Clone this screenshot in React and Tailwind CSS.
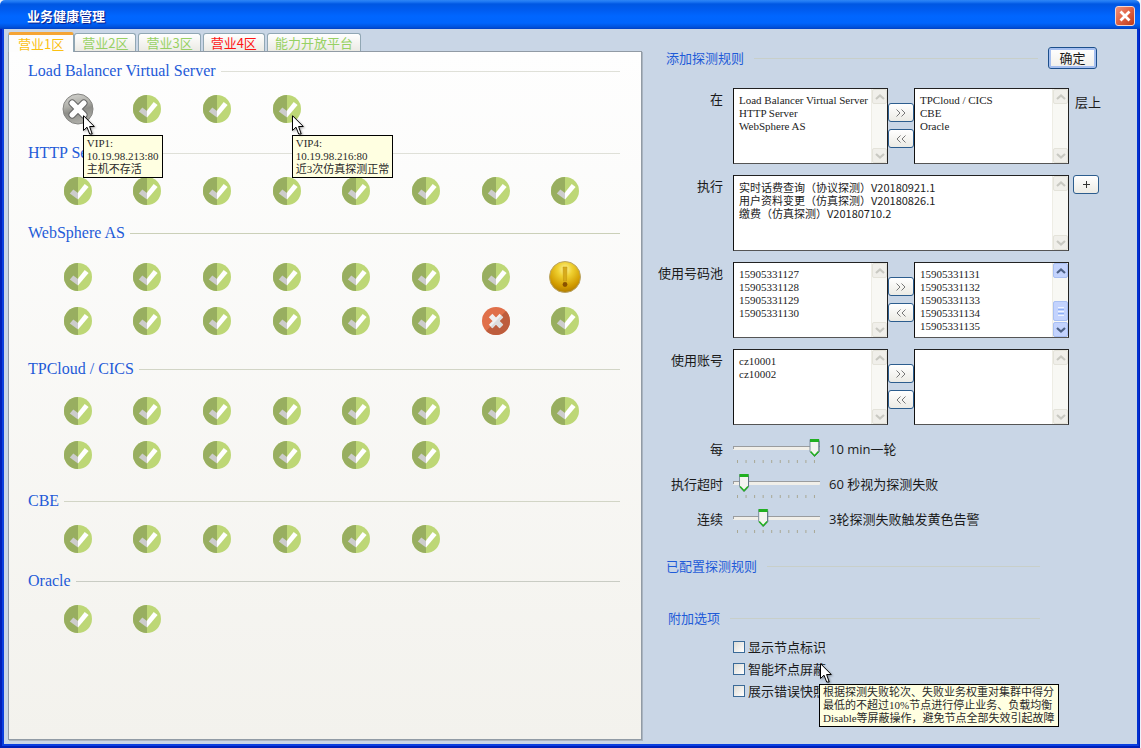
import { useId, useState } from "react";

const tabs = [
  { label: "营业1区", tone: "text-[#fbc012]", active: true },
  { label: "营业2区", tone: "text-[#97d163]" },
  { label: "营业3区", tone: "text-[#97d163]" },
  { label: "营业4区", tone: "text-[#ff1414]" },
  { label: "能力开放平台", tone: "text-[#97d163]" },
];

const ok = (n) => Array.from({ length: n }, () => ({ state: "ok" }));

const groups = [
  {
    name: "Load Balancer Virtual Server",
    spacing: "gap-[6px]",
    rule: "bg-[#dfe0d8]",
    nodes: [
      { state: "down", tip: ["VIP1:", "10.19.98.213:80", "主机不存活"] },
      { state: "ok" },
      { state: "ok" },
      { state: "ok", tip: ["VIP4:", "10.19.98.216:80", "近3次仿真探测正常"] },
    ],
  },
  { name: "HTTP Server", spacing: "mt-[12px] gap-[6px]", rule: "bg-[#dfe0d8]", nodes: ok(8) },
  {
    name: "WebSphere AS",
    spacing: "mt-[10px] gap-[12px]",
    rule: "bg-[#cbd0b8]",
    nodes: [...ok(7), { state: "warn" }, ...ok(6), { state: "error" }, { state: "ok" }],
  },
  { name: "TPCloud / CICS", spacing: "mt-[16px] gap-[10px]", rule: "bg-[#d2d5c6]", nodes: ok(14) },
  { name: "CBE", spacing: "mt-[14px] gap-[6px]", rule: "bg-[#d2d5c6]", nodes: ok(6) },
  { name: "Oracle", spacing: "mt-[10px] gap-[6px]", rule: "bg-[#c9ccc4]", nodes: ok(2) },
];

const sans = "font-['Open_Sans','Noto_Sans_CJK_SC',sans-serif]";
const cjk = "font-['Noto_Sans_CJK_SC',sans-serif]";
const serif = "font-['Liberation_Serif','Noto_Sans_CJK_SC',serif]";

function OkIcon() {
  return (
    <svg viewBox="-14 -14 28 28" className="size-7" aria-hidden="true">
      <circle r="14" fill="#bdd776" />
      <path d="M0-14A14 14 0 0 0 0 14Z" fill="#98ae60" />
      <path d="M-8.200 2.400-4.700-1.600 0 2V8.500Z" fill="#cdcdcd" />
      <path d="M0 1.600 6.700-7 10.600-4 0 8.500Z" fill="#fff" />
    </svg>
  );
}

function ErrorIcon() {
  return (
    <svg viewBox="-14 -14 28 28" className="size-7" aria-hidden="true">
      <circle r="14" fill="#e0704a" />
      <path d="M9.9-9.9A14 14 0 0 1-9.9 9.9Z" fill="#bd5d3d" />
      <path d="M-5.400-5.400 5.400 5.400M5.400-5.400-5.400 5.400" stroke="#f0f0f0" strokeWidth="5" />
      <path d="M3.600 0 7.200 3.600 3.600 7.200 0 3.600-3.600 7.200-5.400 5.400 5.400-5.400 7.200-3.600Z" fill="#dcdcdc" />
    </svg>
  );
}

function DownIcon() {
  return (
    <svg viewBox="-16 -16 32 32" className="size-8" aria-hidden="true">
      <defs>
        <linearGradient id="down-face" x1=".35" y1="0" x2=".6" y2="1">
          <stop offset="0" stopColor="#d0d0cc" />
          <stop offset=".35" stopColor="#b0b0aa" />
          <stop offset=".55" stopColor="#8e8e89" />
          <stop offset="1" stopColor="#b2b2ac" />
        </linearGradient>
      </defs>
      <circle r="15" fill="url(#down-face)" stroke="#858582" strokeWidth="1" />
      <path d="M-5.800-5.800 5.800 5.800M5.800-5.800-5.800 5.800" stroke="#666" strokeWidth="7.400" strokeLinecap="round" />
      <path d="M-5.800-5.800 5.800 5.800M5.800-5.800-5.800 5.800" stroke="#fff" strokeWidth="5.400" strokeLinecap="round" />
    </svg>
  );
}

function WarnIcon() {
  return (
    <svg viewBox="-16 -16 32 32" className="size-8" aria-hidden="true">
      <defs>
        <radialGradient id="warn-face" cx=".5" cy=".25" r=".8">
          <stop offset="0" stopColor="#fdf29a" />
          <stop offset=".3" stopColor="#efd030" />
          <stop offset=".7" stopColor="#d29c00" />
          <stop offset="1" stopColor="#a87400" />
        </radialGradient>
      </defs>
      <circle r="15.500" fill="url(#warn-face)" stroke="#b9a468" strokeWidth="1" />
      <path d="M-2-10H2L1.500 4H-1.500Z" fill="#d6aa1c" stroke="#c0910a" strokeWidth=".5" />
      <circle cy="7.500" r="2.400" fill="#8a5200" />
    </svg>
  );
}

const icons = { ok: OkIcon, down: DownIcon, warn: WarnIcon, error: ErrorIcon };

function Cursor() {
  return (
    <svg viewBox="0 0 12 20" className="h-5 w-3 drop-shadow-[1px_1px_1px_rgba(0,0,0,0.35)]" aria-hidden="true">
      <path d="M.5.7V15.500L4 12.200 6.700 19H9.200L6.600 11.500H11.300Z" fill="#fff" stroke="#000" strokeWidth="1" />
    </svg>
  );
}

function Tip({ lines, className }) {
  return (
    <div
      role="tooltip"
      className={`absolute z-20 w-max border border-black bg-[#ffffe1] px-[3px] py-px text-[11px] leading-[13px] text-[#2a2a2a] ${serif} ${className}`}
    >
      {lines.map((l) => (
        <p key={l} className="whitespace-nowrap">{l}</p>
      ))}
    </div>
  );
}

function Group({ group }) {
  return (
    <section className={`flex flex-col ${group.spacing}`}>
      <div className="flex h-5 items-center gap-[5px]">
        <h2 className={`text-[16px] leading-5 text-[#1f5bd8] ${serif}`}>{group.name}</h2>
        <div className={`h-px flex-1 ${group.rule}`} />
      </div>
      <ul className="ml-[15px] mr-[20px] grid auto-rows-[44px] grid-cols-8">
        {group.nodes.map((node, i) => {
          const Icon = icons[node.state];
          return (
            <li key={i} className="flex items-center justify-center">
              <div className="relative flex size-8 items-center justify-center">
                <Icon />
                {node.tip && (
                  <>
                    <div className="absolute left-[21px] top-[22px] z-30"><Cursor /></div>
                    <Tip lines={node.tip} className="left-[21px] top-[42px]" />
                  </>
                )}
              </div>
            </li>
          );
        })}
      </ul>
    </section>
  );
}

function Chevron({ up, className }) {
  return (
    <svg viewBox="0 0 10 6" className="h-[6px] w-[10px]" fill="none" stroke="currentColor" strokeWidth="2.200" aria-hidden="true">
      <path d={up ? "M1 5 5 1.500 9 5" : "M1 1 5 4.500 9 1"} />
    </svg>
  );
}

function ScrollStrip({ active }) {
  const box = active
    ? "border-[#a9c0f3] bg-[#c3d3fd] text-[#4d6185]"
    : "border-[#e4e3da] bg-[#f0efea] text-[#c9c9c2]";
  return (
    <div aria-hidden="true" className="flex w-4 shrink-0 flex-col items-center border-l border-[#eeede5] bg-[#f8f8f4]">
      <span className={`flex h-[15px] w-[15px] items-center justify-center rounded-[2px] border ${box}`}><Chevron up /></span>
      <span className="flex-1" />
      {active && (
        <span className="mb-px flex h-5 w-[15px] flex-col items-center justify-center gap-px rounded-[2px] border border-[#a9c0f3] bg-[#c3d3fd]">
          <i className="h-px w-[6px] bg-[#eef4fe]" />
          <i className="h-px w-[6px] bg-[#8cb0f8]" />
          <i className="h-px w-[6px] bg-[#eef4fe]" />
          <i className="h-px w-[6px] bg-[#8cb0f8]" />
          <i className="h-px w-[6px] bg-[#eef4fe]" />
        </span>
      )}
      <span className={`flex h-[15px] w-[15px] items-center justify-center rounded-[2px] border ${box}`}><Chevron /></span>
    </div>
  );
}

function ListBox({ id, label, items, width, font = serif, active }) {
  return (
    <div className={`flex h-[76px] border border-b-[#555] border-l-[#111] border-r-[#222] border-t-[#222] bg-white ${width}`}>
      <select
        id={id}
        aria-label={label}
        multiple
        className={`min-w-0 flex-1 appearance-none overflow-hidden bg-white pl-[5px] text-[11px] leading-[13px] text-[#1c1c1c] outline-none [scrollbar-width:none] ${font === serif ? "pt-[5px]" : "pt-[3px]"} ${font}`}
      >
        {items.map((t) => (
          <option key={t} className="h-[13px] min-h-0 overflow-visible whitespace-nowrap p-0 leading-[13px]">{t}</option>
        ))}
      </select>
      <ScrollStrip active={active} />
    </div>
  );
}

function SmallButton({ label, children }) {
  return (
    <button
      type="button"
      aria-label={label}
      className="flex h-[19px] w-[26px] items-center justify-center rounded-[3px] border border-[#2c5d8e] bg-linear-to-b from-white to-[#ecebe5] text-[#777]"
    >
      {children}
    </button>
  );
}

function DoubleChevron({ left }) {
  return (
    <svg viewBox="0 0 10 8" className="h-2 w-[10px]" fill="none" stroke="currentColor" strokeWidth="1" aria-hidden="true">
      <path d={left ? "M4.500.500 1 4 4.500 7.500M9.500.500 6 4 9.500 7.500" : "M.500.500 4 4 .500 7.500M5.500.500 9 4 5.500 7.500"} />
    </svg>
  );
}

function Field({ label, htmlFor, children }) {
  return (
    <div className="flex">
      <label htmlFor={htmlFor} className={`mr-[10px] w-[76px] shrink-0 text-right text-[13px] leading-[22px] text-[#1a1a1a] ${cjk}`}>
        {label}
      </label>
      {children}
    </div>
  );
}

function Transfer({ label, from, to, active, suffix }) {
  const id = useId();
  return (
    <Field label={label} htmlFor={id}>
      <ListBox id={id} items={from} width="w-[155px]" />
      <div className="flex flex-col gap-[7px] pt-[15px]">
        <SmallButton label="添加"><DoubleChevron /></SmallButton>
        <SmallButton label="移除"><DoubleChevron left /></SmallButton>
      </div>
      <ListBox label={`${label} 已选`} items={to} width="w-[155px]" active={active} />
      {suffix && <span className={`ml-[6px] pt-1 text-[13px] leading-5 text-[#1a1a1a] ${cjk}`}>{suffix}</span>}
    </Field>
  );
}

function Slider({ label, min, max, initial, text }) {
  const id = useId();
  const [value, setValue] = useState(initial);
  const x = 4.5 + ((value - min) / (max - min)) * 77;
  return (
    <Field label={label} htmlFor={id}>
      <div className="relative h-[26px] w-[88px]">
        <svg viewBox="0 0 88 26" className="h-[26px] w-[88px]" aria-hidden="true">
          <rect x="0" y="8" width="87" height="4" rx="1" fill="#f1efe9" />
          <path d="M0 8.500H87M.500 8V11" stroke="#9a9c9e" fill="none" />
          {Array.from({ length: 10 }, (_, i) => (
            <rect key={i} x={4 + i * 8.55} y="22" width="1" height="3" fill="#a9a894" />
          ))}
          <g transform={`translate(${x} 0)`}>
            <path d="M-4.500 1.500H4.500V13.500L0 18.500-4.500 13.500Z" fill="#f4f4f0" stroke="#7e8f9e" />
            <path d="M4.500 3V13.500L0 18.500" stroke="#5f7383" fill="none" />
            <path d="M-4.500 1H4.500V4H-4.500Z" fill="#21b021" />
            <path d="M-4 13.500 0 17.700 4 13.500" stroke="#21b021" strokeWidth="1.600" fill="none" />
          </g>
        </svg>
        <input
          id={id}
          type="range"
          min={min}
          max={max}
          value={value}
          onChange={(e) => setValue(Number(e.target.value))}
          className="absolute inset-0 m-0 h-full w-full cursor-pointer opacity-0"
        />
      </div>
      <span className={`ml-2 text-[13px] leading-[22px] text-[#1a1a1a] ${sans}`}>{text}</span>
    </Field>
  );
}

function Legend({ children }) {
  return (
    <>
      <h2 className={`text-[13px] leading-5 text-[#1f5bd8] ${cjk}`}>{children}</h2>
      <div className="h-px flex-1 bg-[#c8cfc9]" />
    </>
  );
}

function Check({ label, tip }) {
  return (
    <div className="relative flex h-[22px] items-center">
      <label className={`flex items-center gap-[3px] text-[13px] leading-[22px] text-[#1a1a1a] ${cjk}`}>
        <input
          type="checkbox"
          className="size-3 appearance-none border border-[#3a6a98] bg-linear-to-br from-[#dddcd6] to-white checked:bg-[#21a121]"
        />
        {label}
      </label>
      {tip && (
        <>
          <div className="absolute left-[87px] top-[5px] z-30"><Cursor /></div>
          <Tip lines={tip} className="left-[86px] top-[26px]" />
        </>
      )}
    </div>
  );
}

export default function App() {
  const ruleId = useId();
  return (
    <div className="flex min-h-screen flex-col bg-[#eef2fb] pr-px">
      <header className="flex h-[29px] shrink-0 items-center justify-between rounded-t-[5px] bg-[linear-gradient(#2f86f5_0,#1a74f2_2px,#0057e2_4px,#005cf0_10px,#0066ff_16px,#0065fd_23px,#0052dc_27px,#0040c4_29px)] pl-[27px] pr-[5px] pt-[3px]">
        <h1 className={`text-[13px] font-bold leading-5 text-white [text-shadow:1px_1px_1px_#0a1883] ${cjk}`}>业务健康管理</h1>
        <button
          type="button"
          aria-label="关闭"
          className="flex size-5 items-center justify-center rounded-[3px] border border-[#f3d6d0] bg-linear-to-br from-[#f0917a] via-[#e06142] to-[#bd3a18]"
        >
          <svg viewBox="0 0 12 12" className="size-3" aria-hidden="true">
            <path d="M1.500 1.500 10.500 10.500M10.500 1.500 1.500 10.500" stroke="#fff" strokeWidth="2.800" />
          </svg>
        </button>
      </header>

      <div className="flex flex-1 flex-col border-b-2 border-l-2 border-r border-[#001fb8]">
        <main className="flex flex-1 border-x-2 border-b-2 border-[#0a3fe0] border-r-[#0030d0] bg-[#c9d6e6] pb-1 pl-1">
          <div className="flex min-w-0 flex-1 flex-col">
            <div role="tablist" className={`flex h-[22px] shrink-0 items-end text-[13px] ${cjk}`}>
              {tabs.map((t) =>
                t.active ? (
                  <button key={t.label} role="tab" aria-selected="true" className={`relative z-10 -mb-px h-5 rounded-t-[3px] border-x border-t-[3px] border-x-[#91a7b4] border-t-[#f5a434] bg-[#fdfdfd] px-[9px] leading-[15px] ${t.tone}`}>
                    {t.label}
                  </button>
                ) : (
                  <button key={t.label} role="tab" aria-selected="false" className={`mr-[2px] h-[18px] rounded-t-[3px] border border-b-0 border-[#91a7b4] bg-linear-to-b from-white to-[#ebeae4] px-[7px] leading-[15px] ${t.tone}`}>
                    {t.label}
                  </button>
                )
              )}
            </div>
            <div role="tabpanel" className="flex-1 border border-[#919ba5] bg-linear-to-b from-[#fefefe] to-[#f3f2ed] pb-4 pl-[19px] pr-[21px] pt-[9px] shadow-[1px_1px_0_#a9b4c0]">
              {groups.map((g) => (
                <Group key={g.name} group={g} />
              ))}
            </div>
          </div>

          <form className="w-[495px] shrink-0 pt-[18px]" onSubmit={(e) => e.preventDefault()}>
            <div className="ml-6 mr-[40px] flex items-center gap-[10px]">
              <Legend>添加探测规则</Legend>
              <button
                type="submit"
                className={`h-[22px] w-[49px] rounded-[3px] border border-[#1c4f8c] bg-linear-to-b from-white to-[#f0efea] text-[13px] leading-[18px] text-[#1a1a1a] shadow-[inset_0_0_0_2px_#a5bff0] ${cjk}`}
              >
                确定
              </button>
            </div>

            <div className="ml-[5px] mt-[19px] flex flex-col gap-[11px]">
              <Transfer
                label="在"
                from={["Load Balancer Virtual Server", "HTTP Server", "WebSphere AS"]}
                to={["TPCloud / CICS", "CBE", "Oracle"]}
                suffix="层上"
              />
              <Field label="执行" htmlFor={ruleId}>
                <ListBox
                  id={ruleId}
                  width="w-[336px]"
                  font={cjk}
                  items={[
                    "实时话费查询（协议探测）V20180921.1",
                    "用户资料变更（仿真探测）V20180826.1",
                    "缴费（仿真探测）V20180710.2",
                  ]}
                />
                <div className="ml-1">
                  <SmallButton label="新增">
                    <svg viewBox="0 0 9 9" className="size-[9px]" stroke="#333" aria-hidden="true">
                      <path d="M4.500 1V8M1 4.500H8" />
                    </svg>
                  </SmallButton>
                </div>
              </Field>
              <Transfer
                label="使用号码池"
                from={["15905331127", "15905331128", "15905331129", "15905331130"]}
                to={["15905331131", "15905331132", "15905331133", "15905331134", "15905331135"]}
                active
              />
              <Transfer label="使用账号" from={["cz10001", "cz10002"]} to={[]} />
            </div>

            <div className="ml-[5px] mt-[13px] flex flex-col gap-[9px]">
              <Slider label="每" min={1} max={10} initial={10} text="10 min一轮" />
              <Slider label="执行超时" min={10} max={600} initial={60} text="60 秒视为探测失败" />
              <Slider label="连续" min={0} max={9} initial={3} text="3轮探测失败触发黄色告警" />
            </div>

            <div className="ml-6 mr-[97px] mt-[22px] flex items-center gap-[10px]">
              <Legend>已配置探测规则</Legend>
            </div>

            <div className="ml-[26px] mr-[97px] mt-8 flex items-center gap-[10px]">
              <Legend>附加选项</Legend>
            </div>
            <div className="ml-[91px] mt-[8px]">
              <Check label="显示节点标识" />
              <Check
                label="智能坏点屏蔽"
                tip={[
                  "根据探测失败轮次、失败业务权重对集群中得分",
                  "最低的不超过10%节点进行停止业务、负载均衡",
                  "Disable等屏蔽操作，避免节点全部失效引起故障",
                ]}
              />
              <Check label="展示错误快照" />
            </div>
          </form>
        </main>
      </div>
    </div>
  );
}
